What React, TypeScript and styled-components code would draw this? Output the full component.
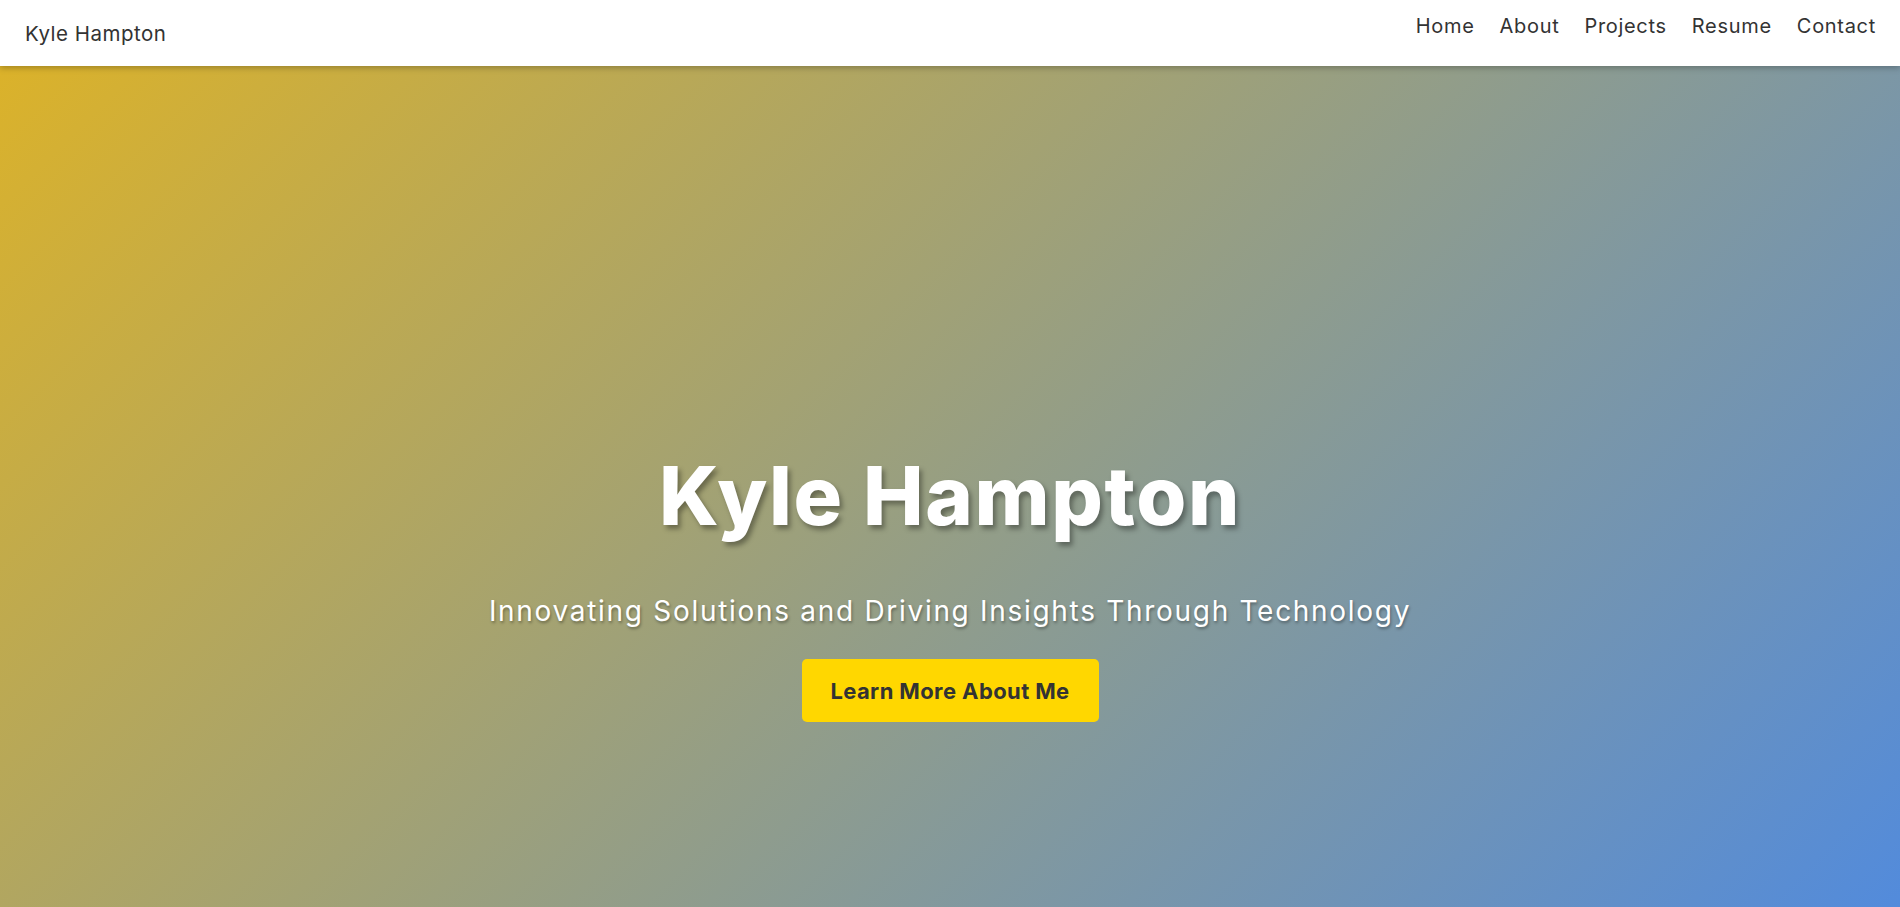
import React from "react";
import styled, { createGlobalStyle } from "styled-components";

const GlobalStyle = createGlobalStyle`
  html, body { margin: 0; padding: 0; }
  body { font-family: Inter, "Open Sans", sans-serif; overflow: hidden; }
  * { box-sizing: border-box; }
`;

const Page = styled.div`
  display: flex;
  flex-direction: column;
  min-height: 100vh;
`;

const NavBar = styled.nav`
  position: relative;
  z-index: 2;
  height: 66px;
  background: #ffffff;
  display: flex;
  justify-content: space-between;
  align-items: flex-start;
  padding: 0 24px 0 25px;
  box-shadow: 0 2px 6px rgba(0, 0, 0, 0.25);
`;

const Brand = styled.a`
  margin-top: 21px;
  font-size: 20.5px;
  font-weight: 400;
  color: #333333;
  text-decoration: none;
  letter-spacing: 0.5px;
`;

const NavList = styled.ul`
  list-style: none;
  margin: 0;
  padding: 0;
  margin-top: 14px;
  display: flex;
  gap: 25px;
`;

const NavLink = styled.a`
  font-size: 20px;
  font-weight: 400;
  color: #333333;
  text-decoration: none;
  letter-spacing: 0.7px;
`;

const Hero = styled.section`
  flex: 1;
  min-height: 907px;
  background: linear-gradient(135deg, #dbb22a 0%, #4f8ae0 100%);
  display: flex;
  flex-direction: column;
  align-items: center;
  padding-top: 382px;
  color: #ffffff;
  text-align: center;
`;

const Title = styled.h1`
  margin: 0;
  font-size: 81px;
  line-height: 96px;
  font-weight: 800;
  letter-spacing: 1.6px;
  text-shadow: 3px 4px 5px rgba(0, 0, 0, 0.35);
`;

const Subtitle = styled.p`
  margin: 49px 0 0;
  font-size: 28px;
  line-height: 36px;
  font-weight: 400;
  letter-spacing: 1.7px;
  text-shadow: 1px 2px 3px rgba(0, 0, 0, 0.35);
`;

const CTA = styled.a`
  margin-top: 30px;
  display: inline-flex;
  align-items: center;
  justify-content: center;
  width: 297px;
  height: 63px;
  background: #ffd700;
  color: #333333;
  border-radius: 5px;
  font-size: 22px;
  font-weight: 700;
  letter-spacing: 0.4px;
  text-decoration: none;
`;

const links = ["Home", "About", "Projects", "Resume", "Contact"];

export default function App() {
  return (
    <Page>
      <GlobalStyle />
      <NavBar>
        <Brand href="#">Kyle Hampton</Brand>
        <NavList>
          {links.map((l) => (
            <li key={l}>
              <NavLink href="#">{l}</NavLink>
            </li>
          ))}
        </NavList>
      </NavBar>
      <Hero>
        <Title>Kyle Hampton</Title>
        <Subtitle>Innovating Solutions and Driving Insights Through Technology</Subtitle>
        <CTA href="#">Learn More About Me</CTA>
      </Hero>
    </Page>
  );
}
